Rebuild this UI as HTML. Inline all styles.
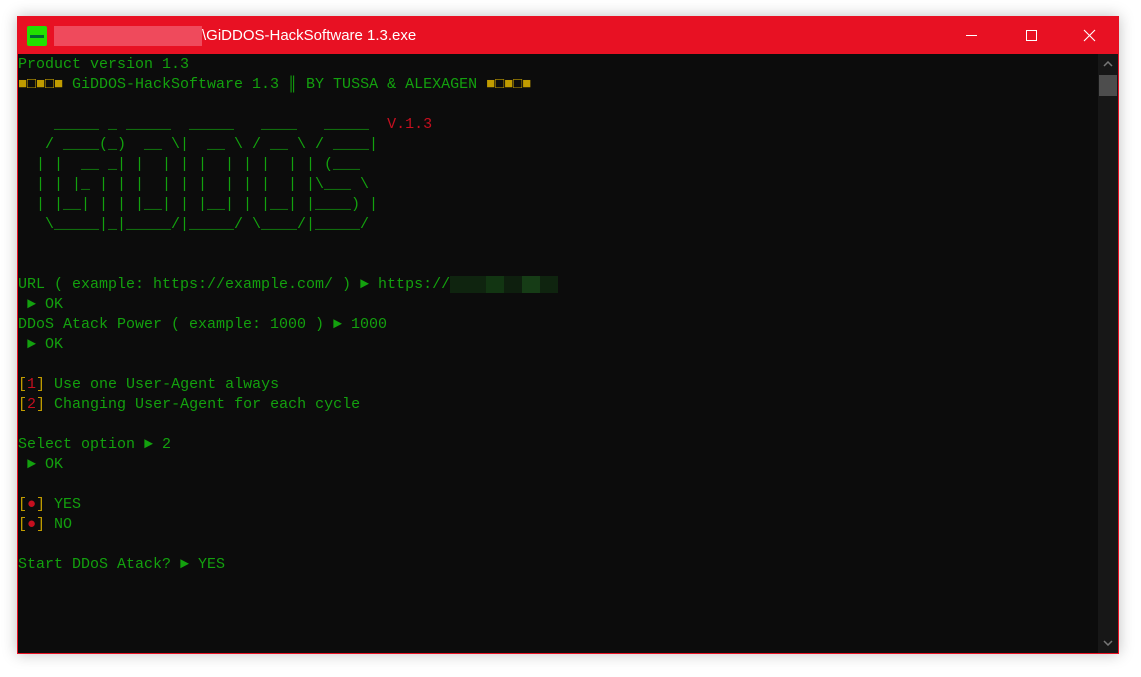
<!DOCTYPE html>
<html><head><meta charset="utf-8"><style>
html,body{margin:0;padding:0;width:1141px;height:677px;background:#fff;overflow:hidden;}
.win{position:absolute;left:17px;top:16px;width:1102px;height:638px;background:#0c0c0c;border:1px solid #e81123;box-sizing:border-box;box-shadow:0 0 14px rgba(0,0,0,0.25);}
.title{position:absolute;left:0;top:0;width:100%;height:37px;background:#e81123;}
.icon{position:absolute;left:9px;top:9px;width:20px;height:20px;background:#22e000;border-radius:2px;}
.icon:after{content:"";position:absolute;left:3px;top:9px;width:14px;height:3px;background:#063;}
.blur{position:absolute;left:36px;top:9px;width:148px;height:20px;background:#ef4a5c;}
.ttext{position:absolute;left:184px;top:10px;font:15px "Liberation Sans",sans-serif;color:#fff;}
.ctl{position:absolute;top:0;height:37px;width:46px;}
.term{position:absolute;left:0;top:38px;font:15px/20px "Liberation Mono",monospace;color:#13a10e;white-space:pre;}
.y{color:#c19c00}.r{color:#c50f1f}
.sb{position:absolute;right:0;top:37px;width:20px;height:599px;background:#171717;}
.thumb{position:absolute;left:1px;top:21px;width:18px;height:21px;background:#4d4d4d;}
</style></head><body>
<div class="win">
 <div class="title">
  <div class="icon"></div><div class="blur"></div>
  <div class="ttext">\GiDDOS-HackSoftware 1.3.exe</div>
  <svg class="ctl" style="left:930px" viewBox="0 0 46 37"><line x1="18" y1="18.5" x2="29" y2="18.5" stroke="#fff"/></svg>
  <svg class="ctl" style="left:990px" viewBox="0 0 46 37"><rect x="18.5" y="13.5" width="10" height="10" fill="none" stroke="#fff"/></svg>
  <svg class="ctl" style="left:1048px" viewBox="0 0 46 37"><path d="M18 13L29 24M29 13L18 24" stroke="#fff" stroke-width="1.1"/></svg>
 </div>
 <div class="term">Product version 1.3
<span class="y">■□■□■</span> GiDDOS-HackSoftware 1.3 ║ BY TUSSA &amp; ALEXAGEN <span class="y">■□■□■</span>

    _____ _ _____  _____   ____   _____  <span class="r">V.1.3</span>
   / ____(_)  __ \|  __ \ / __ \ / ____|
  | |  __ _| |  | | |  | | |  | | (___
  | | |_ | | |  | | |  | | |  | |\___ \
  | |__| | | |__| | |__| | |__| |____) |
   \_____|_|_____/|_____/ \____/|_____/


URL ( example: https://example.com/ ) ► https://<span style="background:#0f240f">    </span><span style="background:#123512">  </span><span style="background:#0e1f0e">  </span><span style="background:#163c16">  </span><span style="background:#0f240f">  </span>
 ► OK
DDoS Atack Power ( example: 1000 ) ► 1000
 ► OK

<span class="y">[</span><span class="r">1</span><span class="y">]</span> Use one User-Agent always
<span class="y">[</span><span class="r">2</span><span class="y">]</span> Changing User-Agent for each cycle

Select option ► 2
 ► OK

<span class="y">[</span><span class="r">●</span><span class="y">]</span> YES
<span class="y">[</span><span class="r">●</span><span class="y">]</span> NO

Start DDoS Atack? ► YES</div>
 <div class="sb"><svg style="position:absolute;left:5px;top:7px" width="10" height="6"><path d="M1 5L5 1L9 5" stroke="#777" stroke-width="1.5" fill="none"/></svg><div class="thumb"></div>
 <svg style="position:absolute;left:5px;bottom:7px" width="10" height="6"><path d="M1 1L5 5L9 1" stroke="#777" stroke-width="1.5" fill="none"/></svg></div>
</div>
</body></html>
